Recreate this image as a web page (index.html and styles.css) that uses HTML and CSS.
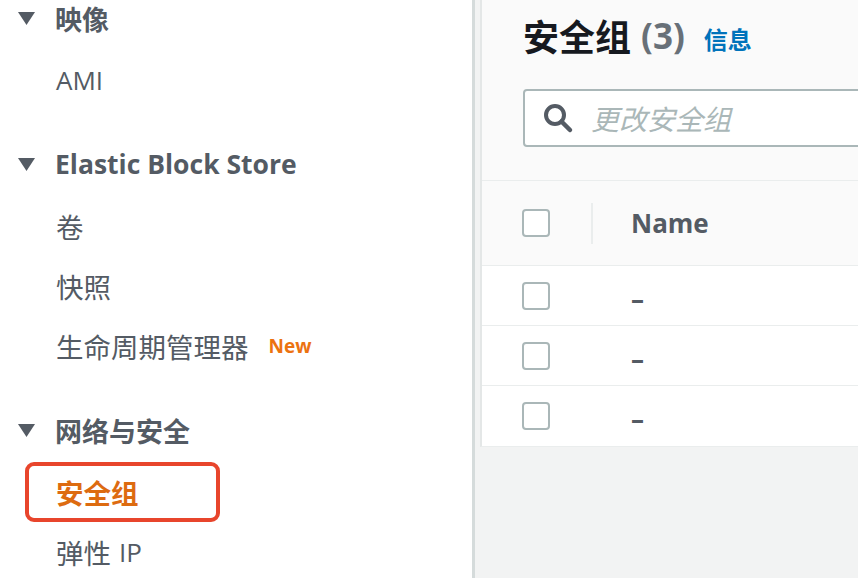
FILE: index.html
```html
<!DOCTYPE html>
<html lang="zh">
<head>
<meta charset="utf-8">
<title>安全组</title>
<link rel="stylesheet" href="styles.css">
</head>
<body>
<div class="page">
  <nav class="sidebar">
    <div class="group">
      <div class="head"><svg class="caret" viewBox="0 0 17 13"><polygon points="0,0 17,0 8.5,13"/></svg><span>映像</span></div>
      <div class="item en">AMI</div>
    </div>
    <div class="group">
      <div class="head en"><svg class="caret" viewBox="0 0 17 13"><polygon points="0,0 17,0 8.5,13"/></svg><span>Elastic Block Store</span></div>
      <div class="item">卷</div>
      <div class="item">快照</div>
      <div class="item">生命周期管理器<span class="badge">New</span></div>
    </div>
    <div class="group">
      <div class="head"><svg class="caret" viewBox="0 0 17 13"><polygon points="0,0 17,0 8.5,13"/></svg><span>网络与安全</span></div>
      <div class="item active">安全组</div>
      <div class="item"><span>弹性</span><span class="en ip">IP</span></div>
    </div>
  </nav>
  <main class="main">
    <section class="panel">
      <div class="panel-head">
        <h1 class="title"><span>安全组</span><span class="count">(3)</span><a class="info">信息</a></h1>
        <div class="search">
          <svg class="search-icon" viewBox="0 0 32 32"><circle cx="13" cy="13" r="9" fill="none" stroke="#545b64" stroke-width="4"/><line x1="19.5" y1="19.5" x2="28" y2="28" stroke="#545b64" stroke-width="4.5" stroke-linecap="round"/></svg>
          <span class="placeholder">更改安全组</span>
        </div>
      </div>
      <div class="row row-head">
        <span class="checkbox"></span>
        <span class="sep"></span>
        <span class="col-name">Name</span>
      </div>
      <div class="row"><span class="checkbox"></span><span class="cell">–</span></div>
      <div class="row"><span class="checkbox"></span><span class="cell">–</span></div>
      <div class="row"><span class="checkbox"></span><span class="cell">–</span></div>
    </section>
  </main>
</div>
</body>
</html>
```
FILE: styles.css
```css
html, body {
  margin: 0;
  padding: 0;
  background: #ffffff;
}
body {
  font-family: "Open Sans", "Noto Sans CJK SC", sans-serif;
  color: #545b64;
}
.page {
  display: flex;
  width: 858px;
  height: 578px;
  overflow: hidden;
}
.sidebar {
  width: 472px;
  flex: none;
  background: #ffffff;
  border-right: 3px solid #d5dbdb;
  padding-top: 0;
}
.group + .group {
  margin-top: 36px;
}
.head {
  display: flex;
  align-items: center;
  height: 36px;
  margin-bottom: 14px;
  padding-left: 18px;
  font-size: 27px;
  font-weight: 700;
  color: #545b64;
}
.head.en {
  font-size: 26.5px;
}
.caret {
  width: 17px;
  height: 13px;
  fill: #545b64;
  margin-right: 20px;
  flex: none;
}
.item {
  display: flex;
  align-items: center;
  height: 60px;
  padding-left: 56px;
  font-size: 27.5px;
  box-sizing: border-box;
}
.item.en, .en {
  font-size: 26px;
}
.ip {
  margin-left: 8px;
}
.badge {
  font-size: 19px;
  font-weight: 700;
  color: #ec7211;
  margin-left: 20px;
}
.item.active {
  margin-left: 25px;
  width: 195px;
  padding-left: 27px;
  border: 4px solid #e8452c;
  border-radius: 9px;
  color: #dd6b10;
  font-weight: 700;
}
.main {
  flex: 1;
  background: #f2f3f3;
  padding-left: 5px;
  overflow: hidden;
}
.panel {
  width: 600px;
  background: #ffffff;
  border-left: 2px solid #e4e7e7;
  border-bottom: 1px solid #eaeded;
}
.panel-head {
  background: #fafafa;
  padding: 13px 0 33px 41px;
  border-bottom: 1px solid #eaeded;
}
.title {
  margin: 0;
  height: 44px;
  display: flex;
  align-items: center;
  font-size: 36px;
  font-weight: 700;
  color: #16191f;
  white-space: nowrap;
}
.count {
  font-size: 35px;
  color: #687078;
  margin-left: 10px;
}
.info {
  font-size: 24px;
  font-weight: 700;
  color: #0073bb;
  margin-left: 19px;
  margin-top: 6px;
}
.search {
  margin-top: 32px;
  height: 58px;
  box-sizing: border-box;
  border: 2px solid #aab7b8;
  border-radius: 4px;
  background: #ffffff;
  display: flex;
  align-items: center;
  padding-left: 17px;
}
.search-icon {
  width: 32px;
  height: 32px;
  flex: none;
}
.placeholder {
  margin-left: 17px;
  font-size: 28px;
  font-style: italic;
  color: #aab7b8;
}
.row {
  display: flex;
  align-items: center;
  height: 60px;
  box-sizing: border-box;
  border-bottom: 1px solid #eaeded;
  padding-left: 40px;
  background: #ffffff;
}
.row:last-child {
  border-bottom: none;
}
.row-head {
  height: 85px;
  background: #fafafa;
}
.checkbox {
  width: 28px;
  height: 28px;
  box-sizing: border-box;
  border: 2px solid #aab7b8;
  border-radius: 4px;
  background: #ffffff;
  flex: none;
}
.sep {
  width: 2px;
  height: 41px;
  background: #eaeded;
  margin-left: 41px;
}
.col-name {
  margin-left: 38px;
  font-size: 26px;
  font-weight: 700;
  color: #545b64;
}
.cell {
  margin-left: 81px;
  font-size: 26px;
  font-weight: 700;
  color: #545b64;
  padding-top: 6px;
}
```
